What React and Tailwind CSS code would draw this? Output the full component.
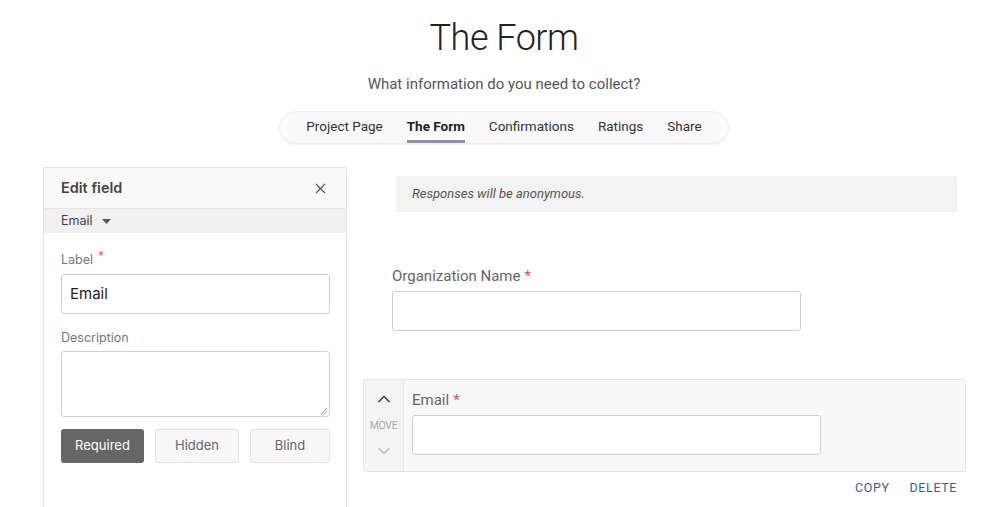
import { X, ChevronUp, ChevronDown } from 'lucide-react';

const TABS = ['Project Page', 'The Form', 'Confirmations', 'Ratings', 'Share'];

function Req() {
  return <span className="text-[#d9534f] ml-1">*</span>;
}

export default function App() {
  return (
    <div className="w-[1008px] h-[507px] overflow-hidden bg-white text-[#333]" style={{ fontFamily: 'Roboto, "Liberation Sans", sans-serif' }}>
      <div className="flex flex-col items-center pt-[14px]">
        <h1 className="text-[36px] leading-[48px] font-light text-[#222] tracking-[-0.5px]">The Form</h1>
        <p className="mt-[12px] text-[15px] leading-5 text-[#555]">What information do you need to collect?</p>
        <nav className="mt-[17px] flex items-stretch gap-6 h-[33px] px-[26px] rounded-full bg-[#fafafa] shadow-[0_1px_2px_rgba(0,0,0,0.06)] border border-[#f0f0f0]">
          {TABS.map((t) => (
            <span
              key={t}
              className={`flex items-center text-[13.5px] border-b-[3px] ${t === 'The Form' ? 'font-bold text-[#222] border-[#8a94a6]' : 'text-[#333] border-transparent'}`}
            >
              {t}
            </span>
          ))}
        </nav>
      </div>

      <div className="flex gap-4 pl-[43px] mt-[23px]">
        <aside className="w-[304px] h-[360px] border border-[#e3e3e3] rounded-t-[2px] shrink-0" style={{ fontFamily: 'Inter, "Liberation Sans", sans-serif' }}>
          <div className="flex items-center justify-between h-[41px] px-[17px] bg-[#f9f9f9] border-b border-[#e6e6e6]">
            <span className="text-[14.5px] font-semibold text-[#444]">Edit field</span>
            <X className="w-[17px] h-[17px] text-[#555]" strokeWidth={1.5} />
          </div>
          <div className="flex items-center h-[24px] px-[17px] bg-[#f0f0f0] text-[12.5px] text-[#444]">
            Email
            <svg className="ml-[9px]" width="9" height="5" viewBox="0 0 9 5"><path d="M0 0h9L4.5 5z" fill="#555" /></svg>
          </div>
          <div className="pl-[17px] pr-[16px] pt-[13px]">
            <label className="text-[12.5px] text-[#777]">Label<span className="text-[#e05a8a] ml-[5px] align-[4px] text-[12px]">*</span></label>
            <div className="mt-[4px] h-[40px] rounded-[3px] border border-[#d0d0d0] flex items-center px-[8px] text-[15px] text-[#222]">Email</div>
            <label className="block mt-[15px] text-[12.5px] text-[#777]">Description</label>
            <div className="mt-[3px] h-[66px] rounded-[3px] border border-[#d0d0d0] relative">
              <svg className="absolute right-[2px] bottom-[2px]" width="7" height="7" viewBox="0 0 7 7"><path d="M1 7L7 1M4 7L7 4" stroke="#888" strokeWidth="0.8" /></svg>
            </div>
            <div className="mt-[12px] flex gap-[11px]">
              <button className="w-[83px] h-[34px] rounded-[3px] bg-[#666] text-white text-[13px]">Required</button>
              <button className="w-[84px] h-[34px] rounded-[3px] bg-[#f8f8f8] border border-[#e3e3e3] text-[#666] text-[13px]">Hidden</button>
              <button className="flex-1 h-[34px] rounded-[3px] bg-[#f8f8f8] border border-[#e3e3e3] text-[#666] text-[13px]">Blind</button>
            </div>
          </div>
        </aside>

        <main className="w-[603px] pt-[9px]">
          <div className="ml-[33px] mr-[9px] h-[36px] rounded-[2px] bg-[#f3f3f3] flex items-center px-[16px] text-[13px] italic text-[#555]">
            Responses will be anonymous.
          </div>
          <div className="ml-[29px] mt-[54px]">
            <div className="text-[15px] leading-5 text-[#666]">Organization Name<Req /></div>
            <div className="mt-[5px] w-[409px] h-[40px] rounded-[3px] border border-[#d0d0d0]" />
          </div>
          <div className="mt-[48px] h-[93px] flex bg-[#f8f8f8] border border-[#e6e6e6] rounded-[2px]">
            <div className="w-[40px] flex flex-col items-center border-r border-[#e6e6e6] bg-[#f4f4f4]">
              <ChevronUp className="mt-[9px] w-[20px] h-[20px] text-[#444]" strokeWidth={2} />
              <span className="mt-[9px] text-[10.5px] text-[#aaa] tracking-[-0.3px]">MOVE</span>
              <ChevronDown className="mt-[7px] w-[20px] h-[20px] text-[#bbb]" strokeWidth={1.5} />
            </div>
            <div className="pl-[8px] pt-[10px]">
              <div className="text-[15px] leading-5 text-[#666]">Email<Req /></div>
              <div className="mt-[5px] w-[409px] h-[40px] rounded-[3px] border border-[#d0d0d0] bg-white" />
            </div>
          </div>
          <div className="flex justify-end gap-[20px] pr-[9px] mt-[7px] text-[12.5px] tracking-[0.6px] text-[#3f5a98]">
            <span>COPY</span>
            <span>DELETE</span>
          </div>
        </main>
      </div>
    </div>
  );
}
